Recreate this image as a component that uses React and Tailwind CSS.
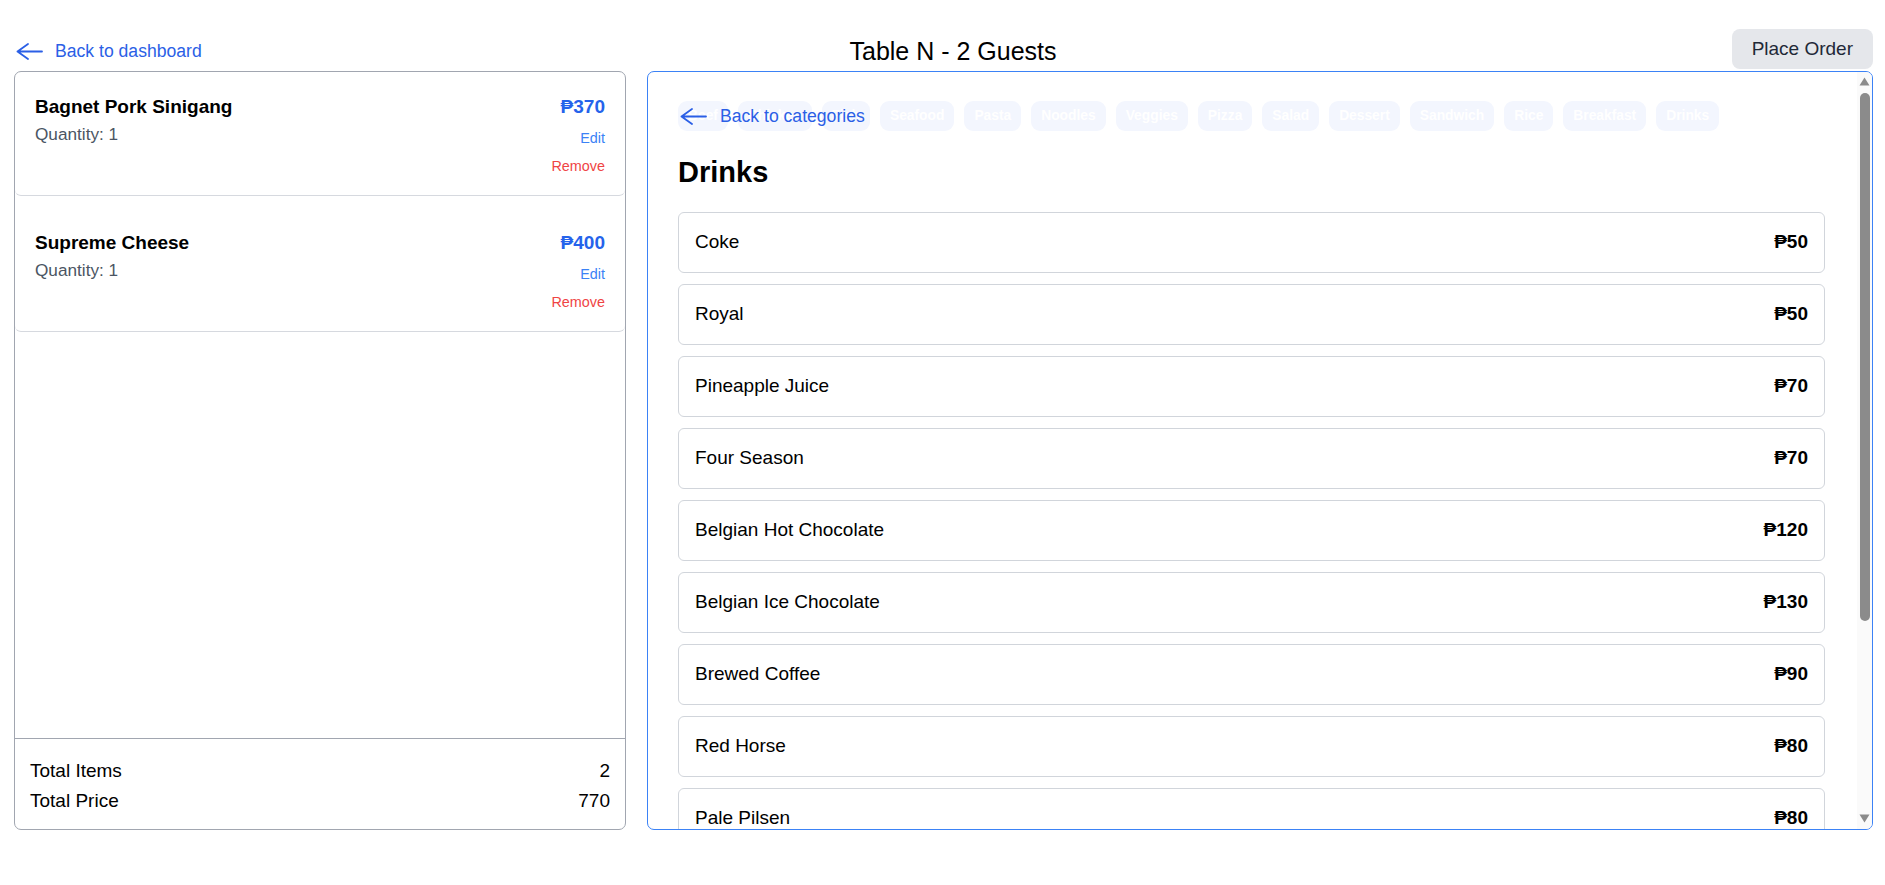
import { useState } from "react";

const ORDER = [
  { id: 1, name: "Bagnet Pork Sinigang", qty: 1, price: 370 },
  { id: 2, name: "Supreme Cheese", qty: 1, price: 400 },
];

const CATEGORIES = [
  "Beef", "Chicken", "Fish", "Seafood", "Pasta", "Noodles", "Veggies",
  "Pizza", "Salad", "Dessert", "Sandwich", "Rice", "Breakfast", "Drinks",
];

const DRINKS = [
  { name: "Coke", price: 50 },
  { name: "Royal", price: 50 },
  { name: "Pineapple Juice", price: 70 },
  { name: "Four Season", price: 70 },
  { name: "Belgian Hot Chocolate", price: 120 },
  { name: "Belgian Ice Chocolate", price: 130 },
  { name: "Brewed Coffee", price: 90 },
  { name: "Red Horse", price: 80 },
  { name: "Pale Pilsen", price: 80 },
  { name: "San Miguel Light", price: 80 },
  { name: "Bottled Water", price: 30 },
  { name: "Iced Tea", price: 60 },
];

function BackArrow() {
  return (
    <svg width="27" height="17" viewBox="0 0 27 17" fill="none" stroke="currentColor" strokeWidth="1.8" strokeLinecap="round" strokeLinejoin="round" aria-hidden="true">
      <path d="M12 1L1.5 8.5L12 16M1.5 8.5H26" />
    </svg>
  );
}

// classic scrollbar look, drawn since the headless browser hides its own
function ScrollBar() {
  return (
    <div className="w-[15px] shrink-0 bg-[#fafafa] flex flex-col items-center pt-[5px] pb-[6px]">
      <svg width="11" height="9" viewBox="0 0 11 9" aria-hidden="true">
        <path d="M5.5 0.5L10.5 8.5H0.5Z" fill="#8b8b8b" strokeLinejoin="round" />
      </svg>
      <div className="mt-[7px] w-[10px] h-[528px] rounded-full bg-[#8b8b8b]" />
      <div className="flex-1" />
      <svg width="11" height="9" viewBox="0 0 11 9" aria-hidden="true">
        <path d="M0.5 0.5H10.5L5.5 8.5Z" fill="#8b8b8b" />
      </svg>
    </div>
  );
}

export default function App() {
  const [order] = useState(ORDER);
  const totalPrice = order.reduce((sum, item) => sum + item.price * item.qty, 0);

  return (
    <div className="min-h-screen bg-white pl-[14px] pr-[12px] font-['Liberation_Sans',Arial,sans-serif] text-black">
      {/* Header */}
      <header className="grid grid-cols-[1fr_auto_1fr] items-center h-[42px] mt-[29px]">
        <a href="#" className="flex items-center gap-[12px] pl-[2px] mt-[3px] text-[#2b5fe6] text-[17.6px] justify-self-start">
          <BackArrow />
          <span>Back to dashboard</span>
        </a>
        <h1 className="ml-[19px] mt-[3px] text-[25px] font-medium leading-none">Table N - 2 Guests</h1>
        <button className="justify-self-end h-[40px] px-[20px] rounded-[8px] bg-[#e5e7eb] text-[#1f2937] text-[19px] -mt-[2px]">
          Place Order
        </button>
      </header>

      <div className="flex gap-[21px] h-[759px]">
        {/* Order summary */}
        <aside className="w-[612px] flex flex-col border border-[#a1a6b0] rounded-[7px]">
          <div className="flex-1 flex flex-col gap-[12px]">
            {order.map((item) => (
              <div key={item.id} className="flex justify-between px-[20px] pt-[21px] pb-[19px] border-b border-[#d6d9df] rounded-b-[6px]">
                <div>
                  <p className="text-[19px] font-semibold leading-[27px]">{item.name}</p>
                  <p className="text-[17.2px] text-[#4b5563] leading-[28px]">Quantity: {item.qty}</p>
                </div>
                <div className="flex flex-col items-end">
                  <p className="text-[19px] font-semibold leading-[27px] text-[#2563eb]">₱{item.price}</p>
                  <button className="mt-[8px] text-[14.4px] leading-[20px] text-[#3b82f6]">Edit</button>
                  <button className="mt-[8px] text-[14.4px] leading-[20px] text-[#ef4444]">Remove</button>
                </div>
              </div>
            ))}
          </div>
          <div className="border-t border-[#a1a6b0] px-[15px] pt-[17px] pb-[13px] text-[19px] leading-[30px]">
            <div className="flex justify-between">
              <span>Total Items</span>
              <span>{order.length}</span>
            </div>
            <div className="flex justify-between">
              <span>Total Price</span>
              <span>{totalPrice}</span>
            </div>
          </div>
        </aside>

        {/* Menu */}
        <section className="flex-1 flex border border-[#3b82f6] rounded-[7px] overflow-hidden">
          <div className="flex-1 overflow-hidden pl-[30px] pr-[32px] pt-[29px]">
            <div className="relative">
              <div className="flex gap-[10px]">
                {CATEGORIES.map((cat) => (
                  <span key={cat} className="h-[30px] px-[10px] flex items-center rounded-[9px] bg-[#f3f6fe] text-white text-[13.8px] font-bold">
                    {cat}
                  </span>
                ))}
              </div>
              <a href="#" className="absolute left-[2px] top-0 h-[30px] flex items-center gap-[13px] text-[#2b5fe6] text-[17.6px]">
                <BackArrow />
                <span>Back to categories</span>
              </a>
            </div>

            <h2 className="mt-[23px] mb-[22px] text-[29px] font-bold leading-[36px]">Drinks</h2>

            <div className="flex flex-col gap-[11px]">
              {DRINKS.map((drink) => (
                <div key={drink.name} className="h-[61px] shrink-0 px-[16px] flex items-center justify-between border border-[#d1d5db] rounded-[6px] text-[19px]">
                  <span>{drink.name}</span>
                  <span className="font-bold">₱{drink.price}</span>
                </div>
              ))}
            </div>
          </div>
          <ScrollBar />
        </section>
      </div>
    </div>
  );
}
